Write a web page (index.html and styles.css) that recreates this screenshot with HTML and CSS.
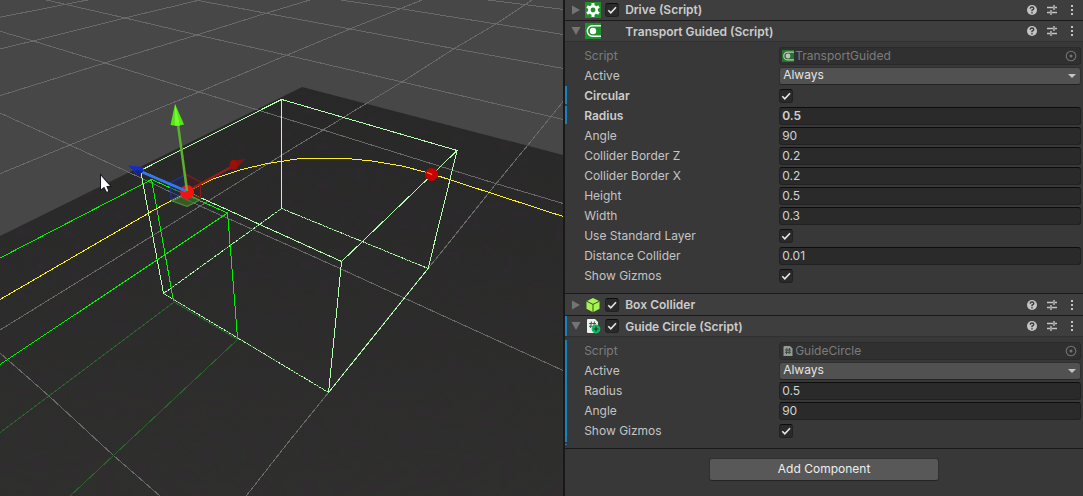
FILE: index.html
```html
<!DOCTYPE html>
<html lang="en">
<head>
<meta charset="utf-8">
<meta name="viewport" content="width=device-width, initial-scale=1">
<title>Inspector</title>
<link rel="stylesheet" href="styles.css">
</head>
<body>
<svg class="sprites" aria-hidden="true">
  <symbol id="i-help" viewBox="0 0 16 16"><circle cx="8" cy="8" r="5" fill="#c4c4c4"/><path d="M6.2 6.7Q6.3 5 8 5Q9.8 5 9.8 6.5Q9.8 7.5 8 8.2V9.2" fill="none" stroke="#3a3a3a" stroke-width="1.4"/><rect x="7.3" y="10.1" width="1.4" height="1.4" fill="#3a3a3a"/></symbol>
  <symbol id="i-preset" viewBox="0 0 16 16"><path d="M3 5.5H9M11 5.5H13M10 3V8M3 10.5H6M8 10.5H13M7 8V13" fill="none" stroke="#c4c4c4" stroke-width="1.4"/></symbol>
  <symbol id="i-menu" viewBox="0 0 16 16"><path d="M7 3h2v2H7zM7 7h2v2H7zM7 11h2v2H7z" fill="#c4c4c4"/></symbol>
  <symbol id="i-right" viewBox="0 0 10 10"><path d="M1 .5L9 5L1 9.500Z" fill="#747474"/></symbol>
  <symbol id="i-down" viewBox="0 0 10 10"><path d="M.5 1H9.500L5 9Z" fill="#747474"/></symbol>
  <symbol id="i-gear" viewBox="0 0 16 16"><rect width="16" height="16" fill="#1f912b"/><g stroke="#fff" stroke-width="3"><path d="M8 1V15M2 4.5L14 11.5M2 11.5L14 4.5"/></g><circle cx="8" cy="8" r="5" fill="#fff"/><circle cx="8" cy="8" r="2.4" fill="#1f912b"/></symbol>
  <symbol id="i-guided" viewBox="0 0 16 16"><rect width="16" height="16" fill="#1f912b"/><path d="M16 2.8H7.5A5.2 5.2 0 0 0 7.5 13.2H16" fill="none" stroke="#fff" stroke-width="1.5"/><circle cx="8" cy="8" r="3.2" fill="#fff"/></symbol>
  <symbol id="i-cube" viewBox="0 0 16 16"><path d="M8 1L14.5 4.2V11.8L8 15.2L1.5 11.8V4.2Z" fill="#a6f450"/><path d="M1.5 4.2L8 7.4L14.5 4.2M8 7.4V15.2" fill="none" stroke="#37521c" stroke-width="1"/></symbol>
  <symbol id="i-script" viewBox="0 0 16 16"><path d="M3 1H10L13 4V15H3Q2 15 2 14V2Q2 1 3 1Z" fill="#f0f0f0"/><path d="M6.5 3.5L5.5 10M9.5 3.5L8.5 10M4 5.5H11M4 8.2H11" stroke="#2c6e43" stroke-width="1.1"/><circle cx="11" cy="11" r="4.4" fill="#15b765"/><path d="M11 8.5V13.5M8.5 11H13.5" stroke="#0c4327" stroke-width="1.2"/></symbol>
  <symbol id="i-file" viewBox="0 0 12 12"><path d="M2.5 1H8L10.5 3.5V11H1.5V2Q1.5 1 2.5 1Z" fill="#c4c4c4"/><path d="M5 3L4.5 9M7.5 3L7 9M3 5H9M3 7.3H9" stroke="#315a3c" stroke-width="1"/></symbol>
  <symbol id="i-pick" viewBox="0 0 12 12"><circle cx="6" cy="6" r="4.8" fill="none" stroke="#747474" stroke-width="1.1"/><circle cx="6" cy="6" r="1.5" fill="#747474"/></symbol>
  <symbol id="i-caret" viewBox="0 0 10 6"><path d="M1 1H9L5 5Z" fill="#c4c4c4"/></symbol>
  <symbol id="i-check" viewBox="0 0 14 14"><path d="M3.3 7.2L5.8 9.8L11 4.2" fill="none" stroke="#e8e8e8" stroke-width="1.6"/></symbol>
</svg>

<main class="editor">
  <section class="scene" aria-label="Scene view">
    <svg class="scene-canvas" viewBox="0 0 563 496" preserveAspectRatio="xMidYMid slice" role="img" aria-label="Collider box with guide path">
      <defs>
        <linearGradient id="ground" x1="0" y1="0" x2="0" y2="1"><stop offset="0" stop-color="#272827"/><stop offset="1" stop-color="#2f2f2e"/></linearGradient>
        <filter id="mottle" x="0" y="0" width="100%" height="100%" color-interpolation-filters="sRGB"><feTurbulence type="fractalNoise" baseFrequency=".06 .1" numOctaves="3" seed="4"/><feColorMatrix values="0 0 0 0 .21  0 0 0 0 .16  0 0 0 0 .21  4 0 0 0 -2"/><feComposite in2="SourceGraphic" operator="in"/></filter>
      </defs>
      <rect width="563" height="496" fill="#474747"/>
      <path d="M0 236L302 87L563 155V496H0Z" fill="url(#ground)"/>
      <path d="M0 236L302 87L563 155V496H0Z" filter="url(#mottle)" opacity=".35"/>
      <g class="wire grid">
        <path d="M487 0L563 9.5M340 0L402 9L496 24L563 34.5M195 0L266 13.3L350 29L454 48.7L563 68.5M46 0L125 18L197 35L290 56L402 82L563 119.5M0 31.3L33 41L105 63L199 92L290 120L323 130L496 183.7L563 203.5M0 113L70 145L143 179L200 206L290 246L341 269L404 298L563 370.5M0 353L49 396L113 455L160 496"/>
        <path d="M0 17.3L66 4.3L88 0M0 49L33 41L125 18L200 0M0 95.7L105 63L197 35L266 13.3L310 0M0 173.7L70 145L199 92L280 58L350 29L422 0M0 330L136 246L290 150L323 130L367 103L402 82L454 48.7L496 24L532 0M246 496L290 440L328 393L404 298L443 250L496 183.7L527 146L563 101.5"/>
      </g>
      <path class="wire dim" d="M0 432.5L174 302L237.5 339.5L70 496"/>
      <path class="wire underlay" d="M281.5 208.5L163.5 293.5L328.5 392.5M281.5 208.5L428 268.5"/>
      <path class="wire dotted" d="M281.5 208.5L163.5 293.5L328.5 392.5M281.5 208.5L428 268.5"/>
      <path class="wire pale" d="M140.5 170.5L281.5 99.5L457 150.5L341.5 261.5ZM281.5 99.5V208.5M457 150.5L428 268.5L328.5 392.5L341.5 261.5M140.5 170.5L163.5 293.5"/>
      <path class="wire green" d="M0 258L151.5 179.5L227.5 213L0 364.5M151.5 179.5L173.5 301M227.5 213L237.5 338.5"/>
      <path class="wire yellow" d="M0 299.5L92 246L154 210L187 192L213 179L240 170L265 164L290 160L301 158.5H346L372 161L402 166L432 174L563 216.5"/>
      <circle cx="431.500" cy="174.500" r="6.500" fill="#c80000"/>
      <path d="M427 172.500L432 174.500" stroke="#ff9a00"/>
      <g>
        <path d="M170.500 182.500L184 175.500L187 192L171 200Z" fill="#1c2868" fill-opacity=".45" stroke="#2234a4"/>
        <path d="M186 174.500L200.500 182V198L187 192Z" fill="#501818" fill-opacity=".35" stroke="#8c1c1c"/>
        <path d="M172 201L187 194L200 200L187 206.500Z" fill="#416d2b" fill-opacity=".7" stroke="#4d9a32"/>
        <path d="M193 188L233 166" stroke="#971e18" stroke-width="2.500"/>
        <path d="M245 159L230 161L235 170Z" fill="#861310"/><ellipse cx="233.500" cy="165" rx="4" ry="5" fill="#9d0f0b"/>
        <circle cx="187" cy="192" r="7" fill="#f31313"/>
        <path d="M178 125L187 191" stroke="#5bb02e" stroke-width="2.500"/>
        <path d="M142 172L186 191" stroke="#3878ef" stroke-width="2.500"/>
        <path d="M175 104L170.500 125L177 126L184 124.500Z" fill="#54e619"/><path d="M175 104L175 125.500L180 125.500Z" fill="#72ff2d"/>
        <path d="M128 165.500L143 167L144 171L138 175.500Z" fill="#132dc9"/><path d="M135 170L143 171L138 175.500Z" fill="#10248a"/>
      </g>
      <path d="M100.500 174.500V190.500L104 187.500L106.500 192.500L109 191.500L107 186.500H111Z" fill="#fff" stroke="#15151f"/>
    </svg>
  </section>

  <aside class="inspector" aria-label="Inspector">
    <header class="bar bar-first">
      <button class="fold" aria-label="Expand Drive"><svg><use href="#i-right"/></svg></button>
      <svg class="kind"><use href="#i-gear"/></svg>
      <label class="tick"><input type="checkbox" checked aria-label="Enable Drive"><svg><use href="#i-check"/></svg></label>
      <h2>Drive (Script)</h2>
      <div class="tools"><button aria-label="Help"><svg><use href="#i-help"/></svg></button><button aria-label="Presets"><svg><use href="#i-preset"/></svg></button><button aria-label="More"><svg><use href="#i-menu"/></svg></button></div>
    </header>

    <section>
      <header class="bar open">
        <button class="fold" aria-label="Collapse Transport Guided"><svg><use href="#i-down"/></svg></button>
        <svg class="kind"><use href="#i-guided"/></svg>
        <span class="tick"></span>
        <h2>Transport Guided (Script)</h2>
        <div class="tools"><button aria-label="Help"><svg><use href="#i-help"/></svg></button><button aria-label="Presets"><svg><use href="#i-preset"/></svg></button><button aria-label="More"><svg><use href="#i-menu"/></svg></button></div>
      </header>
      <div class="props">
        <div class="row off"><label for="t-script">Script</label><div class="object"><svg class="asset"><use href="#i-guided"/></svg><input id="t-script" type="text" value="TransportGuided" disabled><svg class="pick"><use href="#i-pick"/></svg></div></div>
        <div class="row"><label for="t-active">Active</label><div class="drop"><select id="t-active"><option>Always</option></select><svg><use href="#i-caret"/></svg></div></div>
        <div class="row changed"><label for="t-circular">Circular</label><span class="tick"><input id="t-circular" type="checkbox" checked><svg><use href="#i-check"/></svg></span></div>
        <div class="row changed"><label for="t-radius">Radius</label><input class="field" id="t-radius" type="text" value="0.5"></div>
        <div class="row"><label for="t-angle">Angle</label><input class="field" id="t-angle" type="text" value="90"></div>
        <div class="row"><label for="t-bz">Collider Border Z</label><input class="field" id="t-bz" type="text" value="0.2"></div>
        <div class="row"><label for="t-bx">Collider Border X</label><input class="field" id="t-bx" type="text" value="0.2"></div>
        <div class="row"><label for="t-height">Height</label><input class="field" id="t-height" type="text" value="0.5"></div>
        <div class="row"><label for="t-width">Width</label><input class="field" id="t-width" type="text" value="0.3"></div>
        <div class="row"><label for="t-layer">Use Standard Layer</label><span class="tick"><input id="t-layer" type="checkbox" checked><svg><use href="#i-check"/></svg></span></div>
        <div class="row"><label for="t-dist">Distance Collider</label><input class="field" id="t-dist" type="text" value="0.01"></div>
        <div class="row"><label for="t-gizmos">Show Gizmos</label><span class="tick"><input id="t-gizmos" type="checkbox" checked><svg><use href="#i-check"/></svg></span></div>
      </div>
    </section>

    <header class="bar">
      <button class="fold" aria-label="Expand Box Collider"><svg><use href="#i-right"/></svg></button>
      <svg class="kind"><use href="#i-cube"/></svg>
      <label class="tick"><input type="checkbox" checked aria-label="Enable Box Collider"><svg><use href="#i-check"/></svg></label>
      <h2>Box Collider</h2>
      <div class="tools"><button aria-label="Help"><svg><use href="#i-help"/></svg></button><button aria-label="Presets"><svg><use href="#i-preset"/></svg></button><button aria-label="More"><svg><use href="#i-menu"/></svg></button></div>
    </header>

    <section class="added">
      <header class="bar open">
        <button class="fold" aria-label="Collapse Guide Circle"><svg><use href="#i-down"/></svg></button>
        <svg class="kind"><use href="#i-script"/></svg>
        <label class="tick"><input type="checkbox" checked aria-label="Enable Guide Circle"><svg><use href="#i-check"/></svg></label>
        <h2>Guide Circle (Script)</h2>
        <div class="tools"><button aria-label="Help"><svg><use href="#i-help"/></svg></button><button aria-label="Presets"><svg><use href="#i-preset"/></svg></button><button aria-label="More"><svg><use href="#i-menu"/></svg></button></div>
      </header>
      <div class="props">
        <div class="row off"><label for="g-script">Script</label><div class="object"><svg class="asset"><use href="#i-file"/></svg><input id="g-script" type="text" value="GuideCircle" disabled><svg class="pick"><use href="#i-pick"/></svg></div></div>
        <div class="row"><label for="g-active">Active</label><div class="drop"><select id="g-active"><option>Always</option></select><svg><use href="#i-caret"/></svg></div></div>
        <div class="row"><label for="g-radius">Radius</label><input class="field" id="g-radius" type="text" value="0.5"></div>
        <div class="row"><label for="g-angle">Angle</label><input class="field" id="g-angle" type="text" value="90"></div>
        <div class="row"><label for="g-gizmos">Show Gizmos</label><span class="tick"><input id="g-gizmos" type="checkbox" checked><svg><use href="#i-check"/></svg></span></div>
      </div>
    </section>

    <footer class="actions"><button class="add">Add Component</button></footer>
  </aside>
</main>
</body>
</html>
```
FILE: styles.css
```css
* { box-sizing: border-box; }
body {
  margin: 0;
  background: #383838;
  color: #c4c4c4;
  font: 12px/18px Inter, "Liberation Sans", sans-serif;
}
button, input, select { font: inherit; color: inherit; margin: 0; }
button { padding: 0; border: 0; background: none; }
svg { display: block; }
.sprites { position: absolute; width: 0; height: 0; }

.editor {
  display: grid;
  grid-template-columns: 52% minmax(0, 1fr);
  min-height: 100vh;
}

/* Scene view */
.scene { position: relative; overflow: hidden; background: #474747; }
.scene-canvas { position: absolute; inset: 0; width: 100%; height: 100%; }
.wire { fill: none; stroke-width: 1; shape-rendering: crispEdges; }
.grid { stroke: #696969; }
.dim { stroke: #29652a; }
.pale { stroke: #b2ffae; }
.underlay { stroke: #5b7d59; }
.dotted { stroke: #b2ffae; stroke-dasharray: 2 1; }
.green { stroke: #00f400; }
.yellow { stroke: #ffef27; }

/* Inspector */
.inspector { border-left: 2px solid #191919; background: #383838; }
.bar {
  display: flex;
  align-items: center;
  height: 22px;
  padding: 0 3px 0 6px;
  border-top: 1px solid #1a1a1a;
  background: #3e3e3e;
}
.bar-first { height: 20px; border-top: 0; }
.open { border-bottom: 1px solid #303030; }
.bar h2 {
  flex: 1;
  margin: 0;
  font-size: 12px;
  font-weight: 600;
  font-kerning: none;
  color: #cccccc;
}
.open h2 { line-height: 20px; padding-top: 2px; }
.fold { width: 14px; }
.fold svg { width: 10px; height: 10px; }
.kind { width: 16px; height: 16px; margin-right: 4px; }
.tick { position: relative; width: 14px; height: 14px; }
.tick input {
  display: block;
  width: 14px;
  height: 14px;
  appearance: none;
  border: 1px solid #212121;
  border-top-color: #0d0d0d;
  border-radius: 3px;
  background: #2a2a2a;
}
.tick svg { position: absolute; inset: 0; width: 14px; height: 14px; pointer-events: none; }
.tick input:not(:checked) + svg { display: none; }
.bar .tick { margin-right: 6px; }
.tools { display: flex; gap: 4px; }
.tools svg { width: 16px; height: 16px; }

.props {
  display: grid;
  gap: 2px;
  padding: 4px 2px 9px 0;
}
.row {
  position: relative;
  display: grid;
  grid-template-columns: 195px minmax(0, 1fr);
  align-items: center;
  height: 18px;
  padding-left: 19px;
}
.row > label { line-height: 20px; white-space: nowrap; }
.off { color: #7c7c7c; }
.changed { font-weight: 600; color: #cccccc; }
.changed::before, .added .bar::before, .added .props::before, .added .props::after {
  content: "";
  position: absolute;
  left: 0;
  top: 0;
  bottom: 0;
  width: 2px;
  background: #1583be;
}
.added .bar, .added .props { position: relative; }
.added .props::before { top: 3px; bottom: 6px; }
.added .props::after { top: auto; bottom: 3px; height: 1px; }

.field, .object {
  width: 100%;
  height: 18px;
  padding: 0 2px;
  border: 1px solid #212121;
  border-top-color: #0d0d0d;
  border-radius: 3px;
  background: #2a2a2a;
  color: #d2d2d2;
}
.object {
  display: flex;
  align-items: center;
  padding-right: 3px;
  border-color: #2a2a2a;
  background: #303030;
  color: #7c7c7c;
}
.object input { flex: 1; min-width: 0; padding: 0; border: 0; background: none; }
.asset { width: 12px; height: 12px; margin-right: 1px; opacity: .7; }
.pick { width: 12px; height: 12px; }
.drop { position: relative; }
.drop select {
  display: block;
  width: 100%;
  height: 18px;
  padding: 0 3px 2px;
  appearance: none;
  border: 1px solid #303030;
  border-bottom-color: #242424;
  border-radius: 3px;
  background: #515151;
  color: #e4e4e4;
  line-height: 14px;
}
.drop svg { position: absolute; right: 4px; top: 6px; width: 10px; height: 6px; pointer-events: none; }

.actions {
  display: flex;
  justify-content: center;
  padding: 9px 0;
  border-top: 1px solid #1a1a1a;
}
.add {
  width: 230px;
  height: 23px;
  padding-bottom: 1px;
  border: 1px solid #303030;
  border-bottom-color: #242424;
  border-radius: 3px;
  background: #585858;
  color: #eee;
}
```
